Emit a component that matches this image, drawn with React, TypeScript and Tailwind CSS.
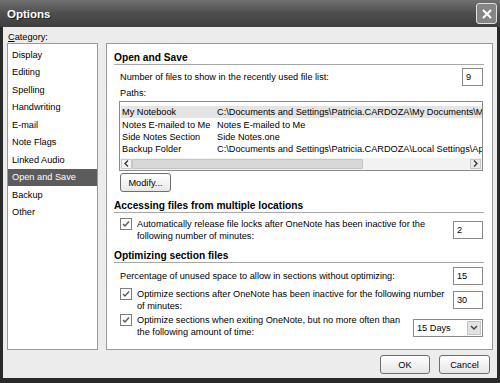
import React from "react";

const categories = [
  "Display",
  "Editing",
  "Spelling",
  "Handwriting",
  "E-mail",
  "Note Flags",
  "Linked Audio",
  "Open and Save",
  "Backup",
  "Other",
];

const paths = [
  ["My Notebook", "C:\\Documents and Settings\\Patricia.CARDOZA\\My Documents\\My"],
  ["Notes E-mailed to Me", "Notes E-mailed to Me"],
  ["Side Notes Section", "Side Notes.one"],
  ["Backup Folder", "C:\\Documents and Settings\\Patricia.CARDOZA\\Local Settings\\App"],
];

const Check = () => (
  <span className="w-[12px] h-[12px] shrink-0 border border-[#7d7d7d] bg-white flex items-center justify-center">
    <svg width="8" height="8" viewBox="0 0 8 8">
      <path d="M1 4 L3 6 L7 1.5" fill="none" stroke="#555" strokeWidth="1.3" />
    </svg>
  </span>
);

const Field = ({ value, w = "w-[30px]" }: { value: string; w?: string }) => (
  <div className={`${w} h-[18px] shrink-0 border border-[#8a8a8a] bg-white px-[3px] flex items-center`}>
    {value}
  </div>
);

const Heading = ({ text }: { text: string }) => (
  <div className="font-bold text-[10.2px] h-[14px] leading-[13px] border-b border-[#a8a8a8] mr-[8px]">{text}</div>
);

export default function App() {
  return (
    <div
      className="w-[500px] h-[383px] bg-[#2a2a2a] flex flex-col text-[9.2px] leading-[12px] text-black overflow-hidden"
      style={{ fontFamily: "'Liberation Sans', Arial, sans-serif" }}
    >
      {/* title bar */}
      <div className="h-[27px] shrink-0 bg-gradient-to-b from-[#707070] via-[#4e4e4e] to-[#3e3e3e] flex items-center justify-between pl-[7px] pr-[3px]">
        <span className="text-white font-bold text-[11.5px] [text-shadow:1px_1px_0_#222]">Options</span>
        <div className="w-[21px] h-[21px] rounded-[3px] border border-[#e0e0e0] bg-[#858585] flex items-center justify-center">
          <svg width="12" height="12" viewBox="0 0 12 12">
            <path d="M2 2 L10 10 M10 2 L2 10" stroke="#fff" strokeWidth="2" />
          </svg>
        </div>
      </div>

      {/* body */}
      <div className="flex-1 mx-[3px] mb-[5px] bg-[#ececec] flex flex-col px-[4px]">
        <div className="h-[16px] flex items-end pl-[1px]">
          <span>
            <span className="underline">C</span>ategory:
          </span>
        </div>
        <div className="flex gap-[8px] h-[307px]">
          {/* category list */}
          <div className="w-[92px] bg-white border border-[#9a9a9a] pt-[2px]">
            {categories.map((c) => (
              <div
                key={c}
                className={`h-[17.5px] flex items-center pl-[4px] ${
                  c === "Open and Save" ? "bg-[#5c5c5c] text-white" : ""
                }`}
              >
                {c}
              </div>
            ))}
          </div>

          {/* main panel */}
          <div className="w-[387px] bg-white border border-[#9a9a9a] pl-[7px] pt-[7px] flex flex-col whitespace-nowrap">
            <Heading text="Open and Save" />
            <div className="flex items-center justify-between pl-[6px] pr-[9px] mt-[2px] h-[20px]">
              <span>Number of files to show in the recently used file list:</span>
              <Field value="9" w="w-[21px]" />
            </div>
            <div className="pl-[6px]">Paths:</div>
            <div className="ml-[5px] mr-[9px] mt-[2px] h-[70px] border border-[#8a8a8a] flex flex-col overflow-hidden">
              <div className="pt-[4px] pl-[1px]">
                {paths.map(([n, p], i) => (
                  <div
                    key={n}
                    className={`h-[12.4px] flex items-center overflow-hidden ${i === 0 ? "bg-[#e4e4e4]" : ""}`}
                  >
                    <span className="w-[96px] shrink-0 pl-[1px]">{n}</span>
                    <span>{p}</span>
                  </div>
                ))}
              </div>
              <div className="mt-auto h-[12px] flex items-center bg-[#f2f2f2] px-[1px] pb-[1px]">
                <div className="w-[11px] h-[10px] border border-[#c8c8c8] bg-[#f4f4f4] flex items-center justify-center">
                  <svg width="5" height="7" viewBox="0 0 5 7">
                    <path d="M4 0.5 L1 3.5 L4 6.5" fill="none" stroke="#333" strokeWidth="1.3" />
                  </svg>
                </div>
                <div className="w-[231px] h-[10px] bg-[#d8d8d8] border border-[#c4c4c4] rounded-[1px]" />
                <div className="flex-1" />
                <div className="w-[11px] h-[10px] border border-[#c8c8c8] bg-[#eaeaea] flex items-center justify-center">
                  <svg width="5" height="7" viewBox="0 0 5 7">
                    <path d="M1 0.5 L4 3.5 L1 6.5" fill="none" stroke="#333" strokeWidth="1.3" />
                  </svg>
                </div>
              </div>
            </div>
            <div className="ml-[6px] mt-[2px] w-[51px] h-[19px] border border-[#6e6e6e] rounded-[3px] bg-gradient-to-b from-white to-[#e8e8e8] flex items-center justify-center">
              Modify...
            </div>

            <div className="mt-[7px]">
              <Heading text="Accessing files from multiple locations" />
            </div>
            <div className="flex items-start justify-between pl-[6px] pr-[9px] mt-[5px]">
              <div className="flex gap-[5px] items-start">
                <Check />
                <span>
                  Automatically release file locks after OneNote has been inactive for the
                  <br />
                  following number of minutes:
                </span>
              </div>
              <div className="mt-[3px]">
                <Field value="2" />
              </div>
            </div>

            <div className="mt-[7px]">
              <Heading text="Optimizing section files" />
            </div>
            <div className="flex items-center justify-between pl-[6px] pr-[9px] mt-[4px] h-[18px]">
              <span>Percentage of unused space to allow in sections without optimizing:</span>
              <Field value="15" />
            </div>
            <div className="flex items-start justify-between pl-[6px] pr-[9px] mt-[3px]">
              <div className="flex gap-[5px] items-start">
                <Check />
                <span>
                  Optimize sections after OneNote has been inactive for the following number
                  <br />
                  of minutes:
                </span>
              </div>
              <div className="mt-[3px]">
                <Field value="30" />
              </div>
            </div>
            <div className="flex items-start justify-between pl-[6px] pr-[9px] mt-[2px]">
              <div className="flex gap-[5px] items-start">
                <Check />
                <span>
                  Optimize sections when exiting OneNote, but no more often than
                  <br />
                  the following amount of time:
                </span>
              </div>
              <div className="mt-[5px] w-[70px] h-[18px] border border-[#8a8a8a] bg-white flex items-center justify-between pl-[3px] pr-[1px]">
                <span>15 Days</span>
                <div className="w-[14px] h-[14px] bg-[#e2e2e2] border border-[#c4c4c4] flex items-center justify-center">
                  <svg width="8" height="6" viewBox="0 0 8 6">
                    <path d="M1 1 L4 4 L7 1" fill="none" stroke="#444" strokeWidth="1.5" />
                  </svg>
                </div>
              </div>
            </div>
          </div>
        </div>

        {/* buttons */}
        <div className="flex justify-end gap-[9px] pr-[3px] mt-[5px]">
          <div className="w-[50px] h-[19px] border border-[#6e6e6e] rounded-[3px] bg-gradient-to-b from-white to-[#e6e6e6] flex items-center justify-center">
            OK
          </div>
          <div className="w-[51px] h-[19px] border border-[#6e6e6e] rounded-[3px] bg-gradient-to-b from-white to-[#e6e6e6] flex items-center justify-center">
            Cancel
          </div>
        </div>
      </div>
    </div>
  );
}
